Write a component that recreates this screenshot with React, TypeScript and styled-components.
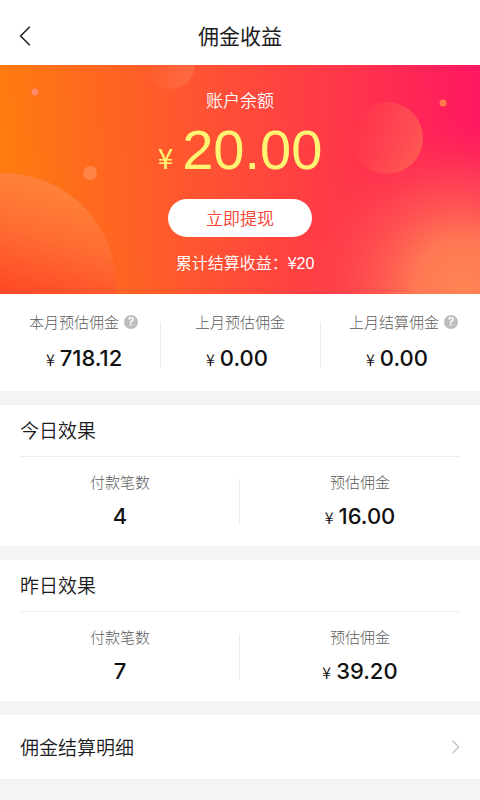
import React from "react";
import styled, { createGlobalStyle } from "styled-components";

const GlobalStyle = createGlobalStyle`
  * { box-sizing: border-box; }
  body {
    margin: 0;
    background: #f4f4f4;
    color: #1c1c1e;
    font-family: "Noto Sans CJK SC", sans-serif;
    font-weight: 350;
  }
`;

const Page = styled.main`
  display: flex;
  flex-direction: column;
  gap: 14px;
  padding-bottom: 20px;
`;

const Top = styled.div`
  background: #fff;
`;

const Header = styled.header`
  display: grid;
  grid-template-columns: 60px 1fr 60px;
  align-items: center;
  height: 65px;
  padding-top: 6px;
`;

const BackButton = styled.button`
  display: flex;
  align-items: center;
  height: 44px;
  padding: 0 0 0 19px;
  border: 0;
  background: none;
  cursor: pointer;
`;

const Title = styled.h1`
  margin: 0;
  padding-bottom: 2px;
  font-size: 21px;
  line-height: 30px;
  font-weight: 400;
  text-align: center;
`;

const Hero = styled.section`
  position: relative;
  display: flex;
  flex-direction: column;
  align-items: center;
  height: 229px;
  padding-top: 22px;
  overflow: hidden;
  color: #fff;
  background: #ff4a3a;
`;

const Backdrop = styled.svg`
  position: absolute;
  inset: 0;
  width: 100%;
  height: 100%;
`;

const HeroContent = styled.div`
  position: relative;
  display: flex;
  flex-direction: column;
  align-items: center;
`;

const HeroLabel = styled.div`
  font-size: 17px;
  line-height: 26px;
`;

const Balance = styled.div`
  display: flex;
  align-items: baseline;
  gap: 9px;
  height: 74px;
  color: #fff573;
  font-family: "Liberation Sans", sans-serif;
  font-size: 56px;
  font-weight: 400;
  line-height: 74px;
`;

const BalanceUnit = styled.span`
  font-family: "Noto Sans CJK SC", sans-serif;
  font-size: 28px;
  line-height: 28px;
`;

const WithdrawButton = styled.button`
  width: 144px;
  height: 38px;
  margin-top: 12px;
  padding: 0;
  border: 0;
  border-radius: 19px;
  background: #fff;
  color: #f8402f;
  font: inherit;
  font-size: 17px;
  line-height: 26px;
  cursor: pointer;
`;

const Settled = styled.div`
  margin-top: 15px;
  padding-left: 10px;
  font-family: "Liberation Sans", "Noto Sans CJK SC", sans-serif;
  font-size: 16px;
  line-height: 24px;
`;

type RowVariant = "overview" | "detail";

const Columns = styled.dl<{ $variant: RowVariant }>`
  display: grid;
  grid-auto-flow: column;
  grid-auto-columns: 1fr;
  margin: 0;
  padding: ${(p) => (p.$variant === "overview" ? "17px 0 20px" : "14px 0 17px")};
`;

const Stat = styled.div<{ $variant: RowVariant }>`
  position: relative;
  display: flex;
  flex-direction: column;
  align-items: center;
  gap: ${(p) => (p.$variant === "overview" ? 12 : 10)}px;

  & + &::before {
    content: "";
    position: absolute;
    left: ${(p) => (p.$variant === "overview" ? 0 : -1)}px;
    top: ${(p) => (p.$variant === "overview" ? 11 : 8)}px;
    width: 1px;
    height: 46px;
    background: #ebebeb;
  }
`;

const StatLabel = styled.dt<{ $hint?: boolean }>`
  display: flex;
  align-items: center;
  gap: 5px;
  padding-left: ${(p) => (p.$hint ? 7 : 0)}px;
  color: #5c5c5c;
  font-size: 15px;
  font-weight: 300;
  line-height: 22px;
  white-space: nowrap;
`;

const StatValue = styled.dd<{ $variant: RowVariant }>`
  display: flex;
  align-items: baseline;
  align-self: ${(p) => (p.$variant === "overview" ? "flex-start" : "center")};
  gap: 5px;
  margin: 0;
  padding-left: ${(p) => (p.$variant === "overview" ? 46 : 0)}px;
  color: #111;
  font-family: Inter, sans-serif;
  font-size: 22px;
  font-weight: 450;
  line-height: 26px;
`;

const Unit = styled.span`
  font-family: "Noto Sans CJK SC", sans-serif;
  font-size: 16px;
  font-weight: 350;
  line-height: 16px;
`;

const HintButton = styled.button`
  display: flex;
  align-items: center;
  justify-content: center;
  width: 14px;
  height: 14px;
  padding: 0;
  border: 0;
  border-radius: 50%;
  background: #bdbdbd;
  color: #fff;
  font-family: Inter, sans-serif;
  font-size: 12px;
  font-weight: 600;
  line-height: 14px;
  cursor: pointer;
`;

const Panel = styled.section`
  background: #fff;
`;

const PanelTitle = styled.h2`
  margin: 0 20px;
  padding-bottom: 1px;
  border-bottom: 1px solid #ededed;
  font-size: 19px;
  font-weight: 350;
  line-height: 50px;
`;

const DetailLink = styled.a`
  display: flex;
  align-items: center;
  justify-content: space-between;
  height: 64px;
  padding: 0 20px;
  background: #fff;
  color: inherit;
  font-size: 19px;
  line-height: 28px;
  text-decoration: none;
`;

type StatData = { label: string; value: string; money?: boolean; hint?: boolean };

const monthly: StatData[] = [
  { label: "本月预估佣金", value: "718.12", money: true, hint: true },
  { label: "上月预估佣金", value: "0.00", money: true },
  { label: "上月结算佣金", value: "0.00", money: true, hint: true },
];

const daily: { title: string; stats: StatData[] }[] = [
  {
    title: "今日效果",
    stats: [
      { label: "付款笔数", value: "4" },
      { label: "预估佣金", value: "16.00", money: true },
    ],
  },
  {
    title: "昨日效果",
    stats: [
      { label: "付款笔数", value: "7" },
      { label: "预估佣金", value: "39.20", money: true },
    ],
  },
];

function StatRow({ stats, variant }: { stats: StatData[]; variant: RowVariant }) {
  return (
    <Columns $variant={variant}>
      {stats.map((s) => (
        <Stat key={s.label} $variant={variant}>
          <StatLabel $hint={s.hint}>
            {s.label}
            {s.hint && <HintButton aria-label={`${s.label}说明`}>?</HintButton>}
          </StatLabel>
          <StatValue $variant={variant}>
            {s.money && <Unit>¥</Unit>}
            {s.value}
          </StatValue>
        </Stat>
      ))}
    </Columns>
  );
}

function HeroBackdrop() {
  return (
    <Backdrop viewBox="0 0 480 229" preserveAspectRatio="xMidYMid slice" aria-hidden="true">
      <defs>
        <linearGradient id="base" gradientUnits="userSpaceOnUse" x1="0" y1="60" x2="480" y2="40">
          <stop offset="0" stopColor="#ff7c0f" />
          <stop offset="0.3" stopColor="#ff5e28" />
          <stop offset="0.5" stopColor="#ff4b39" />
          <stop offset="0.72" stopColor="#ff364a" />
          <stop offset="1" stopColor="#ff1861" />
        </linearGradient>
        <radialGradient id="glow" gradientUnits="userSpaceOnUse" cx="463" cy="222" r="160">
          <stop offset="0" stopColor="#ff8454" />
          <stop offset="0.3" stopColor="#ff7c53" stopOpacity="0.95" />
          <stop offset="0.65" stopColor="#ff5e50" stopOpacity="0.55" />
          <stop offset="1" stopColor="#ff4048" stopOpacity="0" />
        </radialGradient>
        <linearGradient id="planet" x1="0.65" y1="0.05" x2="0.5" y2="0.58">
          <stop offset="0" stopColor="#ff8038" />
          <stop offset="0.4" stopColor="#ff6c32" />
          <stop offset="1" stopColor="#ff4224" />
        </linearGradient>
        <linearGradient id="fade" x1="0.05" y1="0.4" x2="1" y2="0.6">
          <stop offset="0" stopColor="#ff7d50" stopOpacity="0" />
          <stop offset="1" stopColor="#ff7d50" stopOpacity="0.55" />
        </linearGradient>
      </defs>
      <rect width="480" height="229" fill="url(#base)" />
      <rect width="480" height="229" fill="url(#glow)" />
      <circle cx="3" cy="221" r="113" fill="url(#planet)" />
      <circle cx="170" cy="-1" r="25" fill="url(#fade)" />
      <circle cx="387" cy="73" r="36" fill="url(#fade)" />
      <circle cx="35" cy="27" r="3.5" fill="#ff8a6c" />
      <circle cx="90" cy="108" r="7" fill="#ff8446" />
      <circle cx="443" cy="38" r="3.5" fill="#ff784c" />
    </Backdrop>
  );
}

export default function App() {
  return (
    <>
      <GlobalStyle />
      <Page>
        <Top>
          <Header>
            <BackButton aria-label="返回">
              <svg width="12" height="20" viewBox="0 0 12 20" fill="none" stroke="#1c1c1e" strokeWidth="1.5">
                <path d="M10.8 0.8 1.6 10l9.2 9.2" />
              </svg>
            </BackButton>
            <Title>佣金收益</Title>
          </Header>
          <Hero>
            <HeroBackdrop />
            <HeroContent>
              <HeroLabel>账户余额</HeroLabel>
              <Balance>
                <BalanceUnit>¥</BalanceUnit>
                20.00
              </Balance>
              <WithdrawButton>立即提现</WithdrawButton>
              <Settled>累计结算收益：¥20</Settled>
            </HeroContent>
          </Hero>
          <StatRow stats={monthly} variant="overview" />
        </Top>
        {daily.map((d) => (
          <Panel key={d.title}>
            <PanelTitle>{d.title}</PanelTitle>
            <StatRow stats={d.stats} variant="detail" />
          </Panel>
        ))}
        <DetailLink href="#details">
          佣金结算明细
          <svg width="9" height="14" viewBox="0 0 9 14" fill="none" stroke="#c4c4c4" strokeWidth="1.3">
            <path d="M1.5 0.8 7.7 7l-6.2 6.2" />
          </svg>
        </DetailLink>
      </Page>
    </>
  );
}
